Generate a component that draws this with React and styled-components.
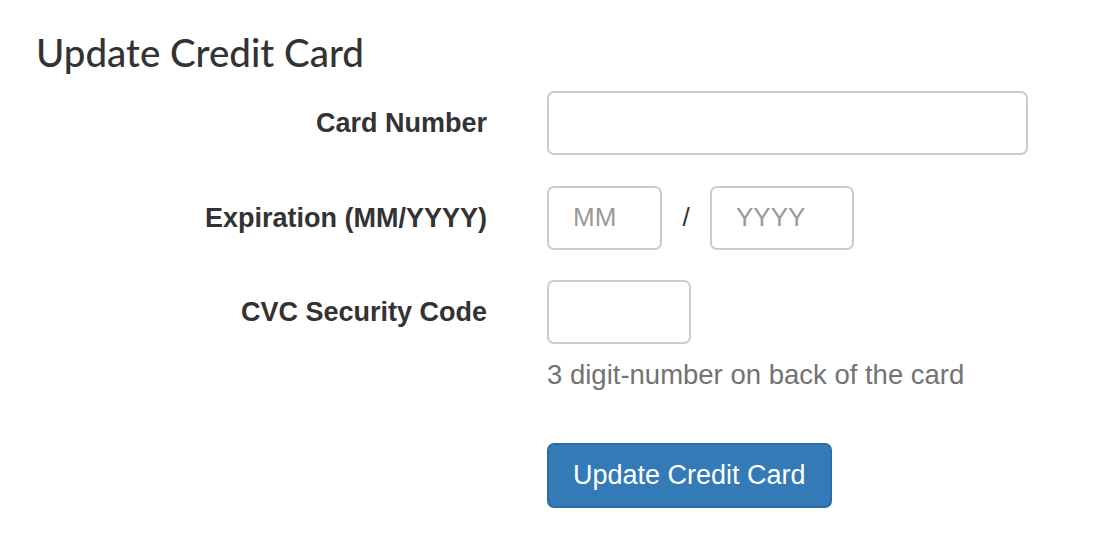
import styled, { createGlobalStyle } from 'styled-components';

const GlobalStyle = createGlobalStyle`
body {
  margin: 0;
  background: #fff;
  font-family: "Liberation Sans", Arial, sans-serif;
  color: #333;
}
`;

const Page = styled.div`
padding: 28px 36px;
`;

const Title = styled.h3`
margin: 0 0 15px;
font-family: Lato, "Liberation Sans", sans-serif;
font-weight: 500;
font-size: 38.5px;
line-height: 48px;
color: #333;
`;

const Form = styled.form`
display: grid;
grid-template-columns: 451px 1fr;
column-gap: 60px;
row-gap: 30.5px;
align-items: start;
`;

const Label = styled.label`
text-align: right;
font-weight: bold;
font-size: 27px;
height: 64px;
line-height: 64px;
color: #333;
`;

const Field = styled.div`
display: flex;
flex-direction: column;
`;

const Inline = styled.div`
display: flex;
align-items: center;
`;

const Input = styled.input`
box-sizing: border-box;
width: ${p => p.$w}px;
height: 64px;
padding: 0 24px;
border: 2px solid #ccc;
border-radius: 7px;
font-family: "Liberation Sans", Arial, sans-serif;
font-size: 26px;
color: #555;
outline: none;
&::placeholder {
  color: #999;
}
`;

const Slash = styled.span`
width: 48px;
text-align: center;
font-size: 26px;
color: #333;
`;

const Help = styled.p`
margin: 14px 0 0;
font-size: 27.5px;
line-height: 34px;
color: #737373;
`;

const Button = styled.button`
grid-column: 2;
justify-self: start;
margin-top: 20px;
height: 65px;
padding: 0 24px;
background: #337ab7;
border: 2px solid #2e6da4;
border-radius: 7px;
color: #fff;
font-family: "Liberation Sans", Arial, sans-serif;
font-size: 27px;
`;

export default function App() {
  return (
    <Page>
      <GlobalStyle />
      <Title>Update Credit Card</Title>
      <Form>
        <Label>Card Number</Label>
        <Field>
          <Input $w={481} />
        </Field>

        <Label>Expiration (MM/YYYY)</Label>
        <Inline>
          <Input $w={115} placeholder="MM" />
          <Slash>/</Slash>
          <Input $w={144} placeholder="YYYY" />
        </Inline>

        <Label>CVC Security Code</Label>
        <Field>
          <Input $w={144} />
          <Help>3 digit-number on back of the card</Help>
        </Field>

        <Button type="button">Update Credit Card</Button>
      </Form>
    </Page>
  );
}
